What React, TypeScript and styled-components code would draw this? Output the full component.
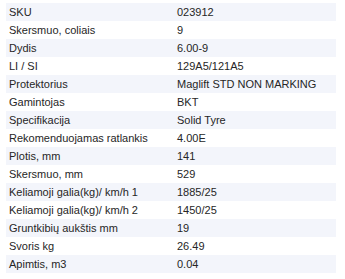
import React from 'react';
import styled, { createGlobalStyle } from 'styled-components';

const GlobalStyle = createGlobalStyle`
  html, body {
    margin: 0;
    padding: 0;
    background: #ffffff;
  }
`;

const Wrapper = styled.div`
  padding: 3px 9px 0 6px;
  font-family: Arial, 'Liberation Sans', sans-serif;
  font-size: 11px;
  color: #262626;
`;

const Table = styled.table`
  width: 330px;
  border-collapse: collapse;
  table-layout: fixed;
`;

const Row = styled.tr<{ $striped: boolean }>`
  height: 18px;
  background: ${(p) => (p.$striped ? '#f3f5fb' : '#ffffff')};
`;

const Label = styled.td`
  width: 165px;
  padding: 0 0 0 3px;
  line-height: 18px;
  white-space: nowrap;
`;

const Value = styled.td`
  padding: 0 0 0 3px;
  line-height: 18px;
  white-space: nowrap;
`;

const specs: [string, string][] = [
  ['SKU', '023912'],
  ['Skersmuo, coliais', '9'],
  ['Dydis', '6.00-9'],
  ['LI / SI', '129A5/121A5'],
  ['Protektorius', 'Maglift STD NON MARKING'],
  ['Gamintojas', 'BKT'],
  ['Specifikacija', 'Solid Tyre'],
  ['Rekomenduojamas ratlankis', '4.00E'],
  ['Plotis, mm', '141'],
  ['Skersmuo, mm', '529'],
  ['Keliamoji galia(kg)/ km/h 1', '1885/25'],
  ['Keliamoji galia(kg)/ km/h 2', '1450/25'],
  ['Gruntkibių aukštis mm', '19'],
  ['Svoris kg', '26.49'],
  ['Apimtis, m3', '0.04'],
];

export default function App() {
  return (
    <>
      <GlobalStyle />
      <Wrapper>
        <Table>
          <tbody>
            {specs.map(([label, value], i) => (
              <Row key={label} $striped={i % 2 === 0}>
                <Label>{label}</Label>
                <Value>{value}</Value>
              </Row>
            ))}
          </tbody>
        </Table>
      </Wrapper>
    </>
  );
}
